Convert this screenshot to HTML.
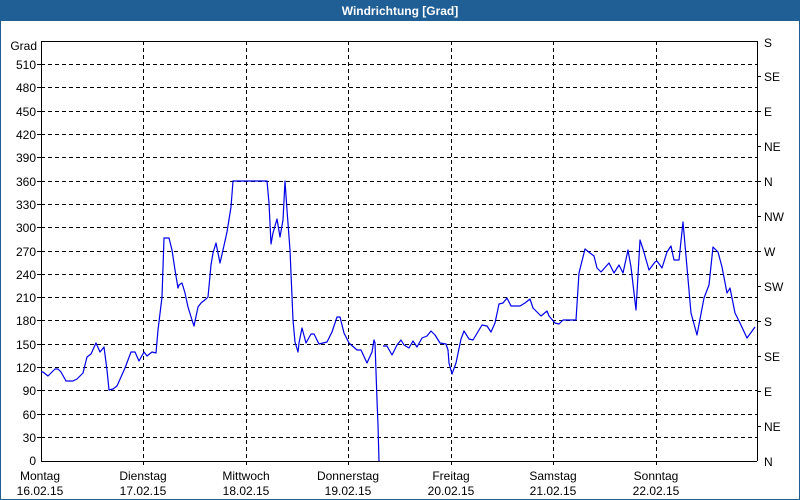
<!DOCTYPE html>
<html><head><style>
html,body{margin:0;padding:0;background:#fff}
svg{display:block}
text{font-family:"Liberation Sans",sans-serif;font-size:12px;fill:#000}
</style></head><body>
<svg width="800" height="500" viewBox="0 0 800 500" xmlns="http://www.w3.org/2000/svg">
<rect x="0" y="0" width="800" height="500" fill="#1f5f96"/>
<rect x="1" y="21" width="798" height="478" fill="#fff"/>
<text x="400" y="15" text-anchor="middle" style="font-weight:bold;fill:#fff;font-size:12px">Windrichtung [Grad]</text>
<g stroke="#000" stroke-width="1" stroke-dasharray="4,3" fill="none">
<path d="M41 64.5H757M41 87.5H757M41 111.5H757M41 134.5H757M41 157.5H757M41 181.5H757M41 204.5H757M41 227.5H757M41 251.5H757M41 274.5H757M41 297.5H757M41 320.5H757M41 344.5H757M41 367.5H757M41 390.5H757M41 414.5H757M41 437.5H757"/>
<path d="M143.5 41V461M246.5 41V461M348.5 41V461M451.5 41V461M553.5 41V461M656.5 41V461"/>
</g>
<g stroke="#000" stroke-width="1" fill="none">
<path d="M41.5 41V461.5H757M41 41.5H757.5V461"/>
<path d="M37 64.5H41M37 87.5H41M37 111.5H41M37 134.5H41M37 157.5H41M37 181.5H41M37 204.5H41M37 227.5H41M37 251.5H41M37 274.5H41M37 297.5H41M37 320.5H41M37 344.5H41M37 367.5H41M37 390.5H41M37 414.5H41M37 437.5H41"/>
<path d="M757 76.5H761M757 111.5H761M757 146.5H761M757 181.5H761M757 216.5H761M757 251.5H761M757 286.5H761M757 321.5H761M757 356.5H761M757 391.5H761M757 426.5H761"/>
<path d="M143.5 461V465M246.5 461V465M348.5 461V465M451.5 461V465M553.5 461V465M656.5 461V465"/>
</g>
<g text-anchor="end">
<text x="37" y="50">Grad</text>
<text x="36" y="69">510</text><text x="36" y="92">480</text><text x="36" y="116">450</text><text x="36" y="139">420</text><text x="36" y="162">390</text><text x="36" y="186">360</text><text x="36" y="209">330</text><text x="36" y="232">300</text><text x="36" y="256">270</text><text x="36" y="279">240</text><text x="36" y="302">210</text><text x="36" y="325">180</text><text x="36" y="349">150</text><text x="36" y="372">120</text><text x="36" y="395">90</text><text x="36" y="419">60</text><text x="36" y="442">30</text><text x="36" y="465">0</text>
</g>
<g>
<text x="764" y="47">S</text><text x="764" y="81">SE</text><text x="764" y="116">E</text><text x="764" y="151">NE</text><text x="764" y="186">N</text><text x="764" y="221">NW</text><text x="764" y="256">W</text><text x="764" y="291">SW</text><text x="764" y="326">S</text><text x="764" y="361">SE</text><text x="764" y="396">E</text><text x="764" y="431">NE</text><text x="764" y="466">N</text>
</g>
<g text-anchor="middle">
<text x="40" y="480">Montag</text><text x="40" y="495">16.02.15</text>
<text x="143" y="480">Dienstag</text><text x="143" y="495">17.02.15</text>
<text x="246" y="480">Mittwoch</text><text x="246" y="495">18.02.15</text>
<text x="348" y="480">Donnerstag</text><text x="348" y="495">19.02.15</text>
<text x="451" y="480">Freitag</text><text x="451" y="495">20.02.15</text>
<text x="553" y="480">Samstag</text><text x="553" y="495">21.02.15</text>
<text x="656" y="480">Sonntag</text><text x="656" y="495">22.02.15</text>
</g>
<g stroke="#0000e6" stroke-width="1.2" fill="none" stroke-linejoin="round">
<polyline points="41,372 43,372 48,376 55,369 58,369 61,372 66,381 73,381 77,379 83,373 87,357 91,354 96,343 100,352 104,347 107,370 109,390 113,389 117,386 125,368 131,352 135,352 139,361 144,352 147,356 152,352 156,353 158,330 162,297 164,238 169,238 172,250 175,270 178,288 179,285 182,283 185,293 188,307 192,320 194,326 198,307 201,303 206,299 208,297 211,265 213,253 216,243 218,253 220,263 223,250 227,232 231,207 233,181 267,181 269,203 271,244 273,233 277,219 280,237 283,220 285,181 287,210 290,250 293,320 295,342 298,352 299,343 302,328 306,343 311,334 314,334 319,344 323,343 327,342 332,332 337,317 340,317 344,333 349,343 357,350 361,350 367,363 372,352 374,340 375,343 377,400 378,425 379,461"/>
<polyline points="383,346 387,346 392,355 397,345 401,340 404,345 409,348 413,341 417,347 422,338 427,336 431,331 435,335 440,343 446,344 448,350 449,363 452,374 456,363 461,339 464,331 469,339 473,340 482,325 487,326 491,332 495,323 499,304 503,303 507,298 511,306 515,306 520,306 525,303 530,299 533,308 541,316 547,311 549,316 555,323 559,324 563,320 576,320 579,273 585,249 590,253 594,256 597,268 601,272 609,263 614,273 619,265 623,273 628,250 631,267 636,310 640,240 643,249 649,270 655,262 657,261 662,268 667,252 671,246 674,260 679,260 683,222 691,313 697,335 704,298 709,285 713,247 718,252 722,267 727,293 730,288 735,313 740,323 747,338 755,327"/>
</g>
</svg>
</body></html>
